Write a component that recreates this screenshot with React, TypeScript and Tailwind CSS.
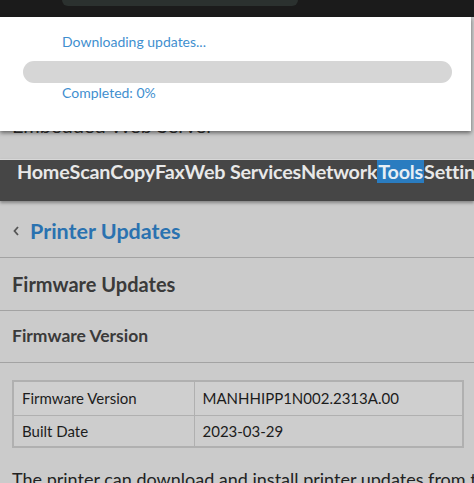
export default function App() {
	const nav = ['Home', 'Scan', 'Copy', 'Fax', 'Web Services', 'Network', 'Tools', 'Settings']

	return (
		<div className="relative h-[483px] w-[474px] overflow-hidden bg-[#cbcbcb] font-['Lato',sans-serif]">
			{/* верхняя тёмная полоса */}
			<div className="h-[17px] bg-[#1b1b1b] px-[62px]">
				<div className="h-[6px] w-[236px] rounded-b-[10px] bg-[#2b312f]" />
			</div>

			{/* заголовок страницы под диалогом */}
			<div className="h-[142px] pt-[93px] pl-[12px] text-[20px] text-[#333]">Embedded Web Server</div>

			{/* меню */}
			<nav className="flex h-[42px] items-start overflow-hidden whitespace-nowrap border-t border-[#d8d8d8] bg-[#464646] pl-[17px] shadow-[0_2px_3px_rgba(0,0,0,0.35)]">
				{nav.map((item) => (
					<span
						key={item}
						className={`text-[19.75px] font-bold leading-[23px] tracking-[-0.2px] ${item === 'Tools' ? 'bg-[#2a7cc0] px-[1px] text-[#e6eef5]' : 'text-[#e8e8e8]'}`}
					>
						{item}
					</span>
				))}
			</nav>

			{/* хлебные крошки */}
			<div className="flex h-[57px] items-center gap-[10px] border-b border-[#a3a3a3] pl-[12px] pt-[4px]">
				<svg width="8" height="12" viewBox="0 0 8 12" className="text-[#555]">
					<path d="M6 2 L2.5 6 L6 10" fill="none" stroke="currentColor" strokeWidth="1.8" />
				</svg>
				<span className="text-[21.5px] font-bold text-[#2a72b0]">Printer Updates</span>
			</div>

			<div className="flex h-[53px] items-center border-b border-[#a3a3a3] pl-[12px]">
				<h2 className="text-[20px] font-bold text-[#3a3a3a]">Firmware Updates</h2>
			</div>

			<div className="flex h-[52px] items-center border-b border-[#a3a3a3] pl-[12px]">
				<h3 className="text-[17.5px] font-bold text-[#3a3a3a]">Firmware Version</h3>
			</div>

			<div className="px-[12px] pt-[17px]">
				<table className="w-[452px] border-collapse border-2 border-[#b0b0b0] text-[15px] text-[#1c1c1c]">
					<tbody>
						<tr className="h-[34px] bg-[#cfcfcf]">
							<td className="w-[181px] border border-[#b0b0b0] pl-[8px]">Firmware Version</td>
							<td className="border border-[#b0b0b0] pl-[8px]">MANHHIPP1N002.2313A.00</td>
						</tr>
						<tr className="h-[32px] bg-[#cdcdcd]">
							<td className="border border-[#b0b0b0] pl-[8px]">Built Date</td>
							<td className="border border-[#b0b0b0] pl-[8px]">2023-03-29</td>
						</tr>
					</tbody>
				</table>
				<p className="mt-[18px] whitespace-nowrap text-[18px] text-[#222]">
					The printer can download and install printer updates from the web.
				</p>
			</div>

			{/* диалог загрузки */}
			<div className="absolute left-0 right-[3px] top-[17px] h-[114px] bg-white shadow-[0_2px_4px_rgba(0,0,0,0.5)]">
				<p className="pl-[62px] pt-[16px] text-[14px] leading-[18px] text-[#3f8fcf]">Downloading updates...</p>
				<div className="ml-[23px] mt-[10px] h-[22px] w-[429px] rounded-full bg-[#d6d6d6]" />
				<p className="pl-[62px] pt-[1px] text-[14px] leading-[18px] text-[#3f8fcf]">Completed: 0%</p>
			</div>
		</div>
	)
}
